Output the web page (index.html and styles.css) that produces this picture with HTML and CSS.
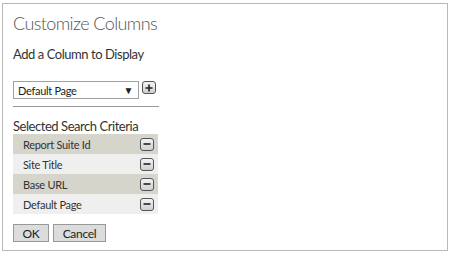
FILE: index.html
```html
<!DOCTYPE html>
<html lang="en">
<head>
    <meta charset="UTF-8">
    <title>Customize Columns</title>
    <link rel="stylesheet" href="styles.css">
</head>
<body>
    <div class="panel">
        <h1>Customize Columns</h1>
        <h2>Add a Column to Display</h2>

        <div class="add-row">
            <div class="select">
                <span>Default Page</span>
                <span class="arrow">&#9660;</span>
            </div>
            <button class="icon-btn" title="Add">
                <svg width="8" height="8" viewBox="0 0 8 8"><path d="M4 0.5v7M0.5 4h7" stroke="#222" stroke-width="1.6"/></svg>
            </button>
        </div>
        <div class="divider"></div>

        <h3>Selected Search Criteria</h3>
        <ul class="criteria">
            <li><span>Report Suite Id</span><button class="icon-btn" title="Remove"><svg width="8" height="8" viewBox="0 0 8 8"><path d="M0.5 4h7" stroke="#222" stroke-width="1.6"/></svg></button></li>
            <li><span>Site Title</span><button class="icon-btn" title="Remove"><svg width="8" height="8" viewBox="0 0 8 8"><path d="M0.5 4h7" stroke="#222" stroke-width="1.6"/></svg></button></li>
            <li><span>Base URL</span><button class="icon-btn" title="Remove"><svg width="8" height="8" viewBox="0 0 8 8"><path d="M0.5 4h7" stroke="#222" stroke-width="1.6"/></svg></button></li>
            <li><span>Default Page</span><button class="icon-btn" title="Remove"><svg width="8" height="8" viewBox="0 0 8 8"><path d="M0.5 4h7" stroke="#222" stroke-width="1.6"/></svg></button></li>
        </ul>

        <div class="actions">
            <button class="btn btn-ok">OK</button>
            <button class="btn btn-cancel">Cancel</button>
        </div>
    </div>
</body>
</html>
```

FILE: styles.css
```css
body {
    margin: 0;
    padding: 3px 2px;
    background: #fff;
    font-family: 'Lato', sans-serif;
    color: #333;
}
.panel {
    width: 446px;
    height: 248px;
    box-sizing: border-box;
    border: 1px solid #b8b8b8;
    padding: 8px 10px;
}
h1 {
    margin: 0;
    font-size: 18px;
    font-weight: 300;
    letter-spacing: -0.6px;
    color: #555;
    line-height: 22px;
}
h2 {
    margin: 12px 0 0;
    font-size: 13px;
    font-weight: 400;
    letter-spacing: -0.45px;
    line-height: 16px;
}
.add-row {
    display: flex;
    align-items: flex-start;
    gap: 3px;
    margin-top: 19px;
}
.select {
    width: 126px;
    height: 18px;
    box-sizing: border-box;
    border: 1px solid #a0a0a0;
    display: flex;
    align-items: center;
    justify-content: space-between;
    padding: 0 5px 0 4px;
    font-size: 11px;
    letter-spacing: -0.3px;
    color: #222;
}
.arrow {
    font-size: 10px;
}
.icon-btn {
    width: 14px;
    height: 13px;
    padding: 0;
    margin: 0;
    border: 1px solid #555;
    border-radius: 3px;
    background: linear-gradient(#f4f4f4, #cfcfcf);
    display: flex;
    align-items: center;
    justify-content: center;
}
.divider {
    width: 146px;
    border-top: 1px solid #999;
    margin-top: 7px;
}
h3 {
    margin: 11px 0 0;
    font-size: 13px;
    font-weight: 400;
    letter-spacing: -0.45px;
    line-height: 16px;
}
.criteria {
    list-style: none;
    margin: 0;
    padding: 0;
    width: 145px;
}
.criteria li {
    height: 20px;
    display: flex;
    align-items: center;
    justify-content: space-between;
    padding: 0 4px 0 10px;
    font-size: 11px;
    letter-spacing: -0.3px;
    color: #333;
    background: #efefef;
}
.criteria li:nth-child(odd) {
    background: #d6d5cc;
}
.actions {
    display: flex;
    gap: 4px;
    margin-top: 10px;
}
.btn {
    height: 18px;
    padding: 0;
    font-family: 'Lato', sans-serif;
    font-size: 12px;
    letter-spacing: -0.3px;
    color: #222;
    background: #dcdcdc;
    border: 1px solid #999;
    border-radius: 0;
}
.btn-ok {
    width: 36px;
}
.btn-cancel {
    width: 53px;
}
```
